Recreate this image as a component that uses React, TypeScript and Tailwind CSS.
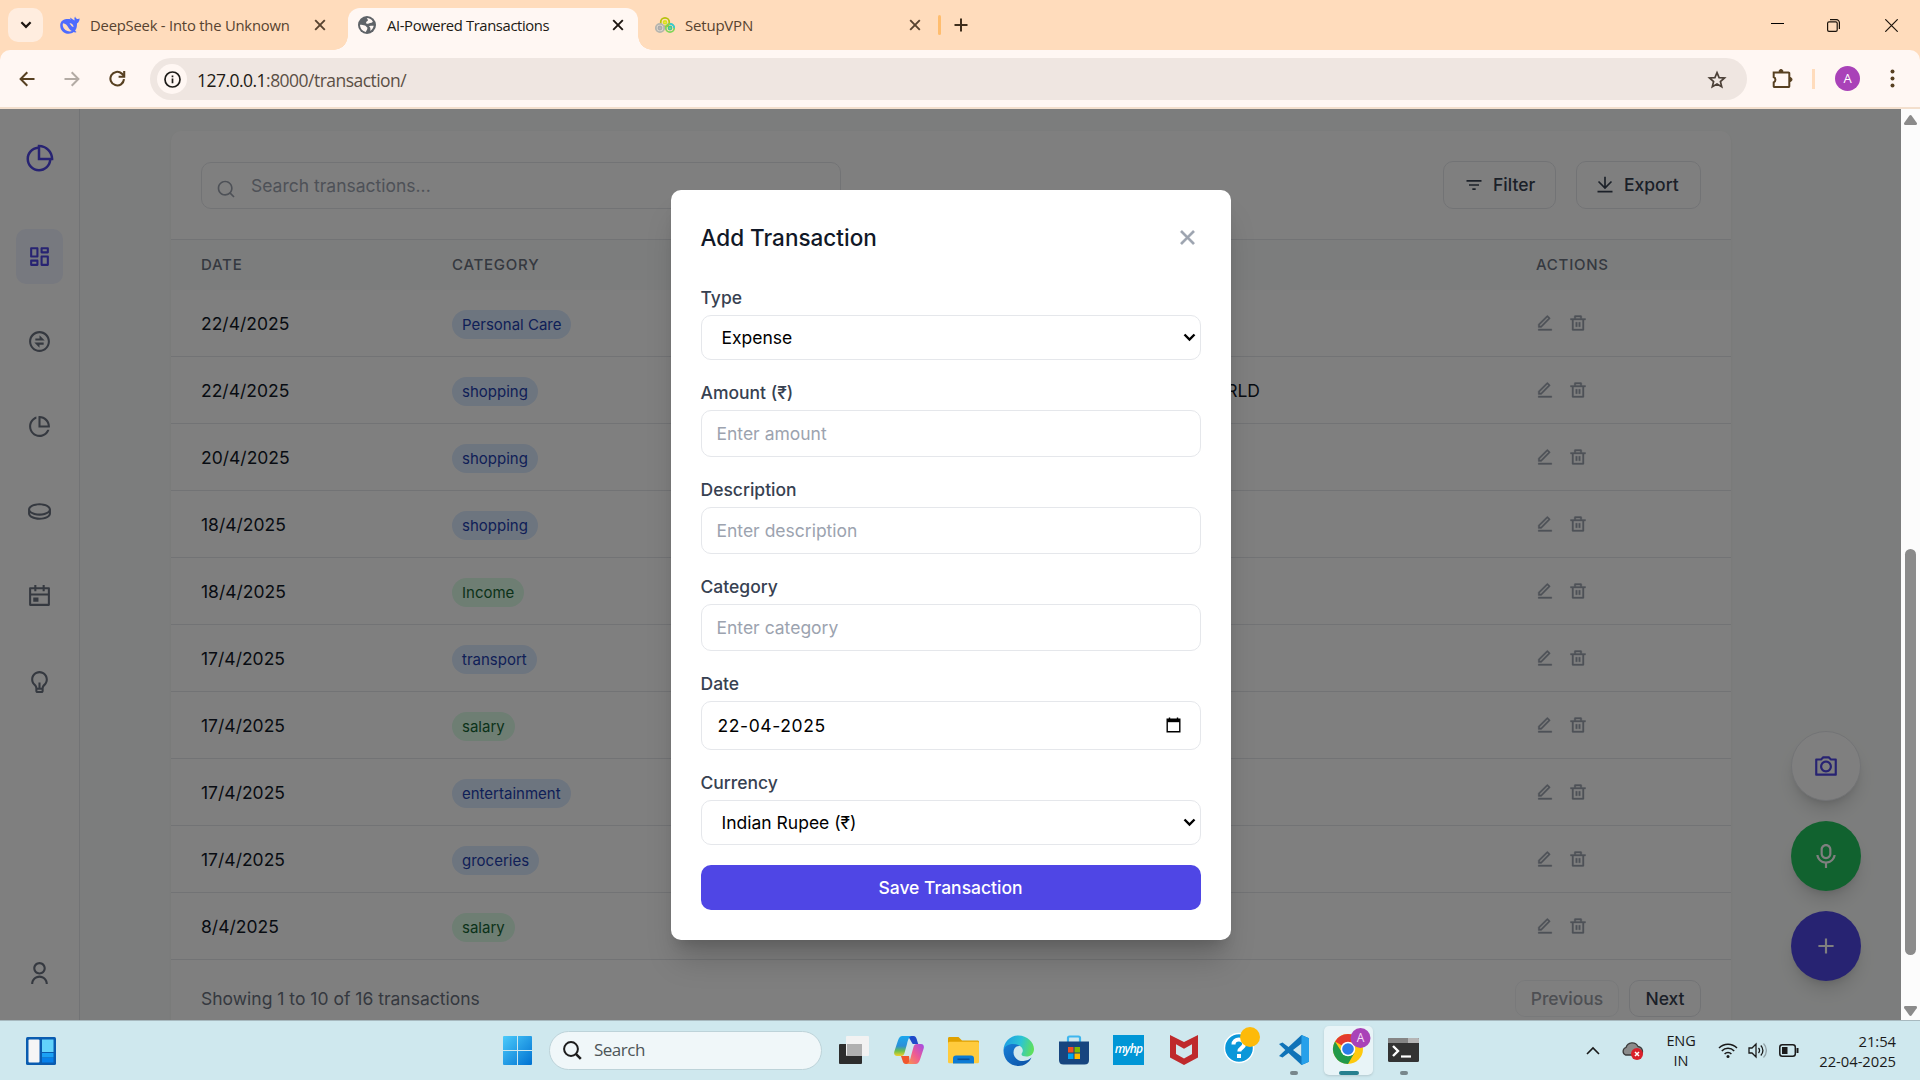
import React from "react";
import {
  RiPieChart2Line, RiDashboardLine, RiExchangeLine, RiPieChartLine, RiCoinLine, RiCalendarEventLine,
  RiLightbulbLine, RiUserLine, RiSearchLine, RiFilter3Line, RiDownloadLine, RiEditLine, RiDeleteBinLine,
  RiCameraLine, RiMicLine, RiAddLine, RiCloseLine,
} from "react-icons/ri";

type Tone = "blue" | "green";
const rows: { date: string; category: string; tone: Tone; note?: string }[] = [
  { date: "22/4/2025", category: "Personal Care", tone: "blue" },
  { date: "22/4/2025", category: "shopping", tone: "blue", note: "WORLD" },
  { date: "20/4/2025", category: "shopping", tone: "blue" },
  { date: "18/4/2025", category: "shopping", tone: "blue" },
  { date: "18/4/2025", category: "Income", tone: "green" },
  { date: "17/4/2025", category: "transport", tone: "blue" },
  { date: "17/4/2025", category: "salary", tone: "green" },
  { date: "17/4/2025", category: "entertainment", tone: "blue" },
  { date: "17/4/2025", category: "groceries", tone: "blue" },
  { date: "8/4/2025", category: "salary", tone: "green" },
];

const Cross = ({ color }: { color: string }) => (
  <svg width="12" height="12" viewBox="0 0 12 12" fill="none" stroke={color} strokeWidth="1.9">
    <path d="M1.2 1.2l9.6 9.6M10.8 1.2l-9.6 9.6" />
  </svg>
);

function DeepSeekIcon() {
  return (
    <svg width="20" height="18" viewBox="0 0 20 18">
      <path
        fill="#4d6bfe"
        d="M19.6 2.6c-.9.5-1.800.6-2.500.3-1-.4-1.700-1.300-2-2.400-.900 1.100-.900 2.700-.2 3.900-1.200-.3-2.600-1.600-4.100-2.500-.8-.5-1.200-.2-.7.4.3.400.7.800.7 1.100C6.500 2.300.2 3.500.2 9.500c0 5 3.900 8.300 8.400 8.300 2 0 3.800-.6 5.100-1.700 1 .6 2.600.4 2.900-.1-.8-.3-1.300-.8-1.500-1.400 1.700-2 1.900-4.500 1.900-7 1.500-.7 2.600-2.700 2.600-5z"
      />
      <path fill="#ffdcbc" d="M3 7.200c2.600.2 4 1.900 5.200 4 1 1.700 2.200 3.200 3.800 3.900-3.600 1.200-8.400-.9-9.200-5.300-.2-1 0-1.900.2-2.600zM9.600 7.400c1.800-.3 3.800 1.300 4 3.500-1.100.1-1.700-.5-2.200-1.200-.5-.8-.9-1.400-1.800-2.300z" />
    </svg>
  );
}

function VpnIcon() {
  return (
    <svg width="20" height="17" viewBox="0 0 20 17" fill="none" strokeWidth="1.800">
      <circle cx="10" cy="5.200" r="4.300" stroke="#b5c20c" />
      <circle cx="10" cy="5.200" r="1.400" stroke="#dbe01c" />
      <circle cx="5" cy="11" r="4.200" stroke="#b5b5ae" fill="#ded6cc" />
      <circle cx="5" cy="11" r="1.500" stroke="#aaa" />
      <circle cx="15" cy="11" r="4.200" stroke="#7fd558" />
      <path d="M15 6.800a4.200 4.200 0 0 1 4.200 4.200" stroke="#35c8d8" />
      <circle cx="15" cy="11" r="1.500" stroke="#43c98d" />
    </svg>
  );
}

function TabStrip() {
  return (
    <div className="flex h-[50px] items-end bg-[#ffdcbc] text-[15px] text-[#574330]">
      <div className="mb-2 ml-2 flex h-[34px] w-[35px] items-center justify-center rounded-[10px] bg-[#ffeddf]">
        <svg width="12" height="8" viewBox="0 0 12 8" fill="none" stroke="#1d1510" strokeWidth="2.200"><path d="M1.400 1.300L6 5.900l4.600-4.600" /></svg>
      </div>
      <div className="flex h-[50px] w-[291px] items-center pl-[17px]">
        <DeepSeekIcon />
        <span className="ml-[10px] w-[224px] whitespace-nowrap text-[14.800px] tracking-[-0.210px]">DeepSeek - Into the Unknown</span>
        <Cross color="#574330" />
      </div>
      <div className="-mr-[13px] h-[14px] w-[14px] bg-[radial-gradient(circle_at_0_0,#ffdcbc_13.5px,#fff7f3_14px)]" />
      <div className="ml-[13px] flex h-[42px] w-[290px] items-center rounded-t-[12px] bg-[#fff7f3] pb-2 pl-[10px] text-[#211a14]">
        <svg width="18" height="18" viewBox="0 0 18 18">
          <circle cx="9" cy="9" r="9" fill="#5f6368" />
          <path fill="#fff7f3" d="M2 8.800c1.800.2 3.500.1 5 .8 1.300.6 1.100 1.600 2.300 2 .4 1.300-.4 2.400-1.500 4.300C4.500 15.200 2 12.600 2 8.800zM8.700 2c2.700 0 5 1.200 6.200 3.700-1 .8-1.500 1.300-2.800 1.200-1.300.2-1.700 1-3 .9-1.500-.1-1.200-1.900-.2-2.500.6-.5 1.300-.7.900-1.600-.2-.7-.9-1-1.100-1.700zM11 10.200c1.600-.5 3-.4 4.700-.4-.3 2.200-1.700 4.200-3.500 5.300.4-1.600.6-3.600-1.200-4.900z" />
        </svg>
        <span className="ml-[11px] w-[225px] whitespace-nowrap text-[14.800px] tracking-[-0.380px]">AI-Powered Transactions</span>
        <Cross color="#1d1510" />
      </div>
      <div className="h-[14px] w-[14px] bg-[radial-gradient(circle_at_100%_0,#ffdcbc_13.5px,#fff7f3_14px)]" />
      <div className="flex h-[50px] flex-1 items-center pl-[3px]">
        <VpnIcon />
        <span className="ml-[10px] w-[224px] tracking-[-0.200px]">SetupVPN</span>
        <Cross color="#574330" />
        <div className="ml-[17px] h-5 w-[3px] rounded-full bg-[#ffbd6e]" />
        <svg className="ml-[13px]" width="14" height="14" viewBox="0 0 14 14" stroke="#3f2e1c" strokeWidth="2"><path d="M7 .5v13M.5 7h13" /></svg>
        <div className="flex-1" />
        <svg className="mr-[43px]" width="13" height="14" viewBox="0 0 13 14"><path d="M0 5.500h13" stroke="#000" strokeWidth="1" /></svg>
        <svg className="mr-[45px]" width="13" height="13" viewBox="0 0 13 13" fill="none" stroke="#1c140c" strokeWidth="1.200">
          <rect x=".6" y="2.800" width="9.600" height="9.600" rx="1.400" />
          <path d="M3 .7h6.500a2.900 2.900 0 0 1 2.900 2.900V10" />
        </svg>
        <svg className="mr-[22px]" width="13" height="13" viewBox="0 0 13 13" stroke="#1c140c" strokeWidth="1.200"><path d="M.3.3l12.400 12.400M12.700.3L.3 12.700" /></svg>
      </div>
    </div>
  );
}

function Toolbar() {
  return (
    <div className="h-[59px] bg-[#ffdcbc]">
      <div className="flex h-[59px] items-center rounded-t-[10px] border-b-2 border-[#f3dfcd] bg-[#fff7f3]">
        <svg className="ml-[19px]" width="16" height="16" viewBox="0 0 16 16" fill="none" stroke="#574021" strokeWidth="2"><path d="M15.500 8H1.800M8.300 1.300L1.600 8l6.700 6.700" /></svg>
        <svg className="ml-[29px]" width="16" height="16" viewBox="0 0 16 16" fill="none" stroke="#b3aba4" strokeWidth="2"><path d="M.5 8h13.700M7.700 1.300L14.400 8l-6.700 6.700" /></svg>
        <svg className="ml-[29px]" width="17" height="17" viewBox="0 0 17 17" fill="none" stroke="#574021" strokeWidth="2.100">
          <path d="M15 9.200A6.800 6.800 0 1 1 12.800 3.600L15 6" /><path d="M15.200 1v5.700H9.600" />
        </svg>
        <div className="ml-[24px] mt-[1px] flex h-[42px] w-[1597px] items-center rounded-full bg-[#efe6e1]">
          <div className="ml-[7px] flex h-[30px] w-[30px] items-center justify-center rounded-full bg-[#fff7f3]">
            <svg width="17" height="17" viewBox="0 0 17 17" fill="none" stroke="#1d1b18" strokeWidth="1.700">
              <circle cx="8.500" cy="8.500" r="7.500" /><path d="M8.500 7.600v4.700M8.500 4.500v1.700" />
            </svg>
          </div>
          <span className="ml-[10px] flex-1 pt-[2px] text-[17.500px] tracking-[-0.530px] text-[#5b4f45]"><span className="text-[#211a14]">127.0.0.1</span>:8000/transaction/</span>
          <svg className="mt-px mr-[20px]" width="20" height="20" viewBox="0 0 20 20" fill="none" stroke="#4c4138" strokeWidth="1.700">
            <path d="M10 2.600l2.100 5 5.400.4-4.100 3.500 1.300 5.300L10 14l-4.700 2.800 1.300-5.300L2.500 8l5.400-.4z" />
          </svg>
        </div>
        <svg className="ml-[24px]" width="22" height="22" viewBox="0 0 22 22" fill="none" stroke="#574021" strokeWidth="2">
          <path d="M3 4.500h14.500a.8.8 0 0 1 .8.8v13a.8.8 0 0 1-.8.8h-14a.8.8 0 0 1-.8-.8v-4a2.900 2.900 0 0 0 0-5.300V4.500z" />
          <path d="M8 3.500a2 2 0 0 1 4 0zM19 9.500a2 2 0 0 1 0 4z" fill="#574021" strokeWidth="1" />
        </svg>
        <div className="ml-[19px] h-[20px] w-[3px] bg-[#ffdcbc]" />
        <div className="ml-[20px] flex h-[25px] w-[25px] items-center justify-center rounded-full bg-[#a942b8] text-[13px] text-white">A</div>
        <svg className="ml-[30px]" width="5" height="19" viewBox="0 0 5 19" fill="#574021"><circle cx="2.500" cy="2.500" r="2" /><circle cx="2.500" cy="9.500" r="2" /><circle cx="2.500" cy="16.500" r="2" /></svg>
      </div>
    </div>
  );
}

function Sidebar() {
  const nav = [RiExchangeLine, RiPieChartLine, RiCoinLine, RiCalendarEventLine, RiLightbulbLine];
  return (
    <aside className="flex h-full w-20 shrink-0 flex-col items-center border-r border-gray-200 bg-white pt-[35px] text-[#6b7280]">
      <RiPieChart2Line size={30} color="#4f46e5" className="mr-[2px]" />
      <div className="mt-[55px] flex h-[55px] w-[47px] items-center justify-center rounded-[10px] bg-[#eef2ff] text-[#4f46e5]">
        <RiDashboardLine size={25} />
      </div>
      {nav.map((Icon, i) => (
        <div key={i} className="mt-[30px] flex h-[55px] w-[47px] items-center justify-center"><Icon size={25} /></div>
      ))}
      <div className="mt-auto mb-[34px]"><RiUserLine size={25} /></div>
    </aside>
  );
}

function TransactionsCard() {
  const cols = "grid grid-cols-[251px_380px_704px_1fr] items-center pl-[30px]";
  return (
    <section className="mt-[22px] w-[1560px] rounded-[10px] bg-white shadow-[0_1px_3px_rgba(0,0,0,0.06)]">
      <div className="flex h-[109px] items-center border-b border-gray-200 px-[30px]">
        <div className="flex h-[47px] w-[640px] items-center rounded-[10px] border border-gray-200 pl-[14px] text-[#9ca3af]">
          <RiSearchLine size={20} className="mt-[8px]" />
          <span className="ml-[15px] pt-[2px]">Search transactions...</span>
        </div>
        <div className="ml-auto flex gap-5 font-medium text-[#374151]">
          <div className="flex h-[48px] w-[113px] items-center gap-[9px] rounded-[10px] border border-gray-200 pl-[20px]"><RiFilter3Line size={20} />Filter</div>
          <div className="flex h-[48px] w-[125px] items-center gap-[9px] rounded-[10px] border border-gray-200 pl-[18px]"><RiDownloadLine size={20} />Export</div>
        </div>
      </div>
      <div className={cols + " h-[50px] bg-[#f9fbfa] text-[15px] font-medium tracking-[0.750px] text-[#6b7280]"}>
        <span>DATE</span><span>CATEGORY</span><span /><span>ACTIONS</span>
      </div>
      {rows.map((r, i) => (
        <div key={i} className={cols + " h-[67px] border-b border-gray-200 text-[#111827]"}>
          <span className="pt-[2px]">{r.date}</span>
          <span className="flex pt-[2px]">
            <span className={r.tone === "blue" ? "flex h-[29px] items-center rounded-full bg-[#dbeafe] px-[10px] pt-[2px] text-[15px] text-[#1e40af]" : "flex h-[29px] items-center rounded-full bg-[#dcfce7] px-[10px] pt-[2px] text-[15px] text-[#166534]"}>{r.category}</span>
          </span>
          <span className="w-[428px] justify-self-start pt-[2px] text-right">{r.note}</span>
          <span className="flex gap-[15px] text-[#9ca3af]"><RiEditLine size={18} strokeWidth={0.5} /><RiDeleteBinLine size={18} strokeWidth={0.5} /></span>
        </div>
      ))}
      <div className="flex h-[77px] items-center px-[30px] text-[#6b7280]">
        <span className="pt-[2px]">Showing 1 to 10 of 16 transactions</span>
        <div className="ml-auto flex gap-[10px] font-medium">
          <div className="flex h-[37px] w-[104px] items-center justify-center rounded-[10px] border border-gray-200 pt-[2px] text-[#374151] opacity-50">Previous</div>
          <div className="flex h-[37px] w-[72px] items-center justify-center rounded-[10px] border border-gray-200 pt-[2px] text-[#374151]">Next</div>
        </div>
      </div>
    </section>
  );
}

function FloatingActions() {
  const base = "flex h-[70px] w-[70px] items-center justify-center rounded-full shadow-[0_12px_19px_-4px_rgba(0,0,0,0.15),0_5px_8px_-5px_rgba(0,0,0,0.15)]";
  return (
    <div className="absolute right-[40px] bottom-[39px] flex flex-col gap-5">
      <div className={base + " border border-gray-200 bg-white text-[#4f46e5]"}><RiCameraLine size={26} /></div>
      <div className={base + " bg-[#22c55e] text-white"}><RiMicLine size={26} /></div>
      <div className={base + " bg-[#4f46e5] text-white"}><RiAddLine size={26} /></div>
    </div>
  );
}

function Field({ label, children }: { label: string; children: React.ReactNode }) {
  return (
    <div className="mb-5">
      <div className="mb-[5px] h-[25px] leading-[25px] font-medium text-[#374151]">{label}</div>
      {children}
    </div>
  );
}

const SelectBox = ({ value }: { value: string }) => (
  <div className="flex h-[45px] items-center justify-between rounded-[10px] border border-gray-200 pr-[4px] pl-[20px] text-black">
    <span className="pt-[2px]">{value}</span>
    <svg width="13" height="9" viewBox="0 0 13 9" fill="none" stroke="#000" strokeWidth="2.400"><path d="M1.500 1.500l5 5 5-5" /></svg>
  </div>
);

const TextBox = ({ hint }: { hint: string }) => (
  <input className="block h-[47px] w-full rounded-[10px] border border-gray-200 px-[15px] placeholder:text-[#9ca3af]" placeholder={hint} />
);

function Modal() {
  return (
    <div className="h-[750px] w-[560px] rounded-[10px] bg-white p-[30px] shadow-[0_25px_31px_-6px_rgba(0,0,0,0.18),0_10px_13px_-7px_rgba(0,0,0,0.15)]">
      <div className="mb-[30px] flex h-[35px] items-center justify-between">
        <h3 className="text-[22.500px] font-medium text-[#111827]">Add Transaction</h3>
        <RiCloseLine size={27} color="#9ca3af" strokeWidth={0.4} />
      </div>
      <Field label="Type"><SelectBox value="Expense" /></Field>
      <Field label="Amount (₹)"><TextBox hint="Enter amount" /></Field>
      <Field label="Description"><TextBox hint="Enter description" /></Field>
      <Field label="Category"><TextBox hint="Enter category" /></Field>
      <Field label="Date">
        <div className="flex h-[49px] items-center justify-between rounded-[10px] border border-gray-200 pr-[19px] pl-[16px] text-black">
          <span className="pt-[2px] tracking-[0.600px]">22-04-2025</span>
          <svg className="-mt-[2px]" width="15" height="16" viewBox="0 0 15 16" fill="none" stroke="#000" strokeWidth="1.400"><path d="M1.200 2.300h12.600v12.400H1.200z" /><path d="M1.200 3.700h12.600" strokeWidth="3" /><path d="M3.500.4v2M11.500.4v2" /></svg>
        </div>
      </Field>
      <Field label="Currency"><SelectBox value="Indian Rupee (₹)" /></Field>
      <div className="flex h-[45px] items-center justify-center rounded-[10px] bg-[#4f46e5] pt-[2px] font-medium text-white">Save Transaction</div>
    </div>
  );
}

const icons: React.ReactNode[] = [
  <svg key="tv" width="30" height="28" viewBox="0 0 30 28"><rect y="8" width="23" height="20" rx="1" fill="#2d2d2d" /><rect x="7" y="0" width="23" height="20" rx="1" fill="#f2f2f2" /><path d="M8 8h15v12H8z" fill="#b0b0b0" /></svg>,
  <svg key="cp" width="30" height="28" viewBox="0 0 30 28">
    <defs>
      <linearGradient id="cpa" x1="0" y1="0" x2="0" y2="1"><stop stopColor="#1aa7ee" /><stop offset=".5" stopColor="#2b8fd8" /><stop offset=".75" stopColor="#6cbf4b" /><stop offset="1" stopColor="#f5d028" /></linearGradient>
      <linearGradient id="cpb" x1="1" y1="0" x2="0" y2="1"><stop stopColor="#a04be8" /><stop offset=".5" stopColor="#ee5a94" /><stop offset="1" stopColor="#fb9a45" /></linearGradient>
    </defs>
    <path d="M14 0h5.500c2 0 2.600 1.300 3.200 3.200l1.500 4.800h-5.500z" fill="#1f49c9" />
    <path d="M8.500 0h9c-3 1-3.500 4-4.500 8l-2.500 9c-.5 2-1.500 3-3.500 3H3c-2.500 0-3.500-2-2.500-5l3.300-10C5 1.500 6 0 8.500 0z" fill="url(#cpa)" />
    <path d="M7 20h8l1 8h-4c-2.300 0-2.900-1.500-3.500-3.500z" fill="#f0572e" />
    <path d="M21.500 28h-9c3-1 3.500-4 4.500-8l2.500-9c.5-2 1.500-3 3.500-3h4c2.500 0 3.500 2 2.500 5l-3.300 10c-1.200 3.500-2.200 5-4.700 5z" fill="url(#cpb)" />
  </svg>,
  <svg key="ex" width="31" height="27" viewBox="0 0 31 27"><path d="M0 1.500C0 .5.600 0 1.500 0h9L14 3.500h15.500c1 0 1.500.5 1.500 1.500v6H0z" fill="#e0a100" /><rect y="4.800" width="31" height="21.500" rx="1.500" fill="#ffcb3d" /><path d="M5 26.500v-5c0-2 1-3 3-3h15c2 0 3 1 3 3v5z" fill="#0d7bd4" /><path d="M9.500 21.500h12v1.600h-12z" fill="#0a4f95" /></svg>,
  <svg key="ed" width="31" height="31" viewBox="0 0 31 31">
    <defs>
      <linearGradient id="eda" x1="0" y1=".3" x2="1" y2=".5"><stop stopColor="#1c9de4" /><stop offset=".55" stopColor="#2cc4d4" /><stop offset="1" stopColor="#5fe05a" /></linearGradient>
      <linearGradient id="edb" x1="0" y1="0" x2="1" y2="1"><stop stopColor="#1780d8" /><stop offset="1" stopColor="#0c4fa3" /></linearGradient>
    </defs>
    <path d="M.5 15.500C.5 7 7 .5 15.500.5S31 7 31 14c0 5-3.500 7.500-7.500 7.500-3 0-5-1-5-2.300 0-1 1.300-1.500 1.300-3.700 0-3-3-5.500-7.300-5.500C6.500 10 .5 12.500.5 15.500z" fill="url(#eda)" />
    <path d="M.5 15.500C1 11.500 5.500 9 10 9c3 0 5.500.8 7 2-4-.5-6.500 2.500-6.500 6.500 0 5 4.500 9 10 8.500 3.500-.3 6-1.500 8-3.500-2.500 5.500-7.500 8.500-13 8.500C7 31 .5 24.500.5 15.500z" fill="url(#edb)" />
  </svg>,
  <svg key="st" width="30" height="30" viewBox="0 0 30 30"><path d="M9 7V3c0-1 .6-1.500 1.500-1.500h9c1 0 1.500.5 1.500 1.500v4" fill="none" stroke="#3fb6ee" strokeWidth="2.200" /><path d="M0 6.500h30V25c0 3-1.500 4.500-4.500 4.500h-21C1.500 29.500 0 28 0 25z" fill="#17457f" /><path d="M9 12h5.500v5.500H9z" fill="#f25022" /><path d="M15.500 12H21v5.500h-5.500z" fill="#7fba00" /><path d="M9 18.500h5.500V24H9z" fill="#00a4ef" /><path d="M15.500 18.500H21V24h-5.500z" fill="#ffb900" /></svg>,
  <div key="hp" className="flex h-[30px] w-[31px] items-center justify-center bg-[#0096d6] pb-[2px] text-[12px] font-semibold tracking-[-0.800px] text-white italic">myhp</div>,
  <svg key="mc" width="28" height="30" viewBox="0 0 28 30"><path d="M0 0l14 7L28 0v22.500L14 30 0 22.500zM6 9.300v9.800l8 4.400 8-4.400V9.300l-8 4.500z" fill="#bf2a2c" fillRule="evenodd" /></svg>,
  <svg key="he" width="40" height="38" viewBox="0 0 40 38"><circle cx="17" cy="21" r="14.500" fill="#0a97d9" stroke="#fff" strokeWidth="1.400" /><path d="M11.500 17.500c0-3.500 2.500-5 5.300-5 3 0 5.400 1.800 5.400 4.500 0 4-4.700 3.800-4.900 7.500M17 27v4" fill="none" stroke="#fff" strokeWidth="4" /><circle cx="28" cy="10" r="10" fill="#fdba09" /></svg>,
  <svg key="vs" width="30" height="30" viewBox="0 0 30 30"><path d="M22.500 0L30 3.200v23.600L22.500 30 9.500 18 3.500 22.600 0 20.900 6.300 15 0 9.100l3.500-1.700 6 4.600zM22.500 8.500L14 15l8.500 6.500z" fill="#0f73b8" fillRule="evenodd" /><path d="M22.500 0L30 3.200v23.600L22.500 30z" fill="#26a0ea" /></svg>,
  <svg key="ch" width="41" height="38" viewBox="0 0 41 38">
    <circle cx="18" cy="21" r="15" fill="#fdc90f" />
    <path d="M18 21L5 13.500A15 15 0 0 1 31 13.500L31 14H18z" fill="#e33b2e" />
    <path d="M5 13.500A15 15 0 0 0 18 36l6.500-11.300L18 28l-6-3.500z" fill="#21994a" />
    <circle cx="18" cy="21" r="7.300" fill="#fff" /><circle cx="18" cy="21" r="5.800" fill="#2b7de9" />
    <circle cx="30.500" cy="10" r="10" fill="#a942b8" />
    <text x="30.500" y="14.200" fontSize="12" textAnchor="middle" fill="#f3dff5">A</text>
  </svg>,
  <svg key="te" width="31" height="24" viewBox="0 0 31 24"><rect width="31" height="24" rx="1.500" fill="#333" /><path d="M1.500 0h28C30.500 0 31 .6 31 1.500V5H0V1.500C0 .6.500 0 1.500 0z" fill="#858585" /><path d="M20 0h9.500C30.500 0 31 .6 31 1.500V5H20z" fill="#b5b5b5" /><path d="M5 8l5 5-5 5" fill="none" stroke="#fff" strokeWidth="2.400" /><path d="M13 18.500h10" stroke="#fff" strokeWidth="2.200" /></svg>,
];

function Taskbar() {
  return (
    <div className="flex h-[60px] items-center border-t border-[#a8b9bf] bg-[#cfe8ee] text-[#1a1a1a]">
      <svg className="ml-[26px]" width="30" height="28" viewBox="0 0 30 28"><rect width="30" height="28" rx="1.500" fill="#0a5cb0" /><rect x="2.500" y="2.500" width="11" height="23" rx="1" fill="#f5f5f5" /><path d="M16 2.500h11.500V15H16z" fill="#62d3fb" /><path d="M16 16h11.500v4.500H16z" fill="#1ba1f5" /><path d="M16 21h11.500v4.500H16z" fill="#0680ea" /></svg>
      <svg className="ml-[447px]" width="29" height="29" viewBox="0 0 29 29">
        <defs><linearGradient id="win" x1="0" y1="0" x2="1" y2="1"><stop stopColor="#4ccbfb" /><stop offset="1" stopColor="#0071d1" /></linearGradient></defs>
        <path d="M1 0h13v14H0V1a1 1 0 0 1 1-1zM15 0h13a1 1 0 0 1 1 1v13H15zM0 15h14v14H1a1 1 0 0 1-1-1zM15 15h14v13a1 1 0 0 1-1 1H15z" fill="url(#win)" />
      </svg>
      <div className="-mt-px ml-[17px] flex h-[39px] w-[273px] items-center rounded-full border border-[#bdd3d9] bg-[#f0f7f9] pl-[13px] text-[#4d5558]">
        <svg width="19" height="19" viewBox="0 0 19 19" fill="none" stroke="#1c1c1c"><circle cx="8" cy="8" r="6.900" strokeWidth="2" /><path d="M12.800 12.800l5 5" strokeWidth="2.600" /></svg>
        <span className="ml-[12px] text-[17px] tracking-[-0.500px]">Search</span>
      </div>
      <div className="-mt-px ml-[4px] flex h-full">
        {icons.map((ic, i) => (
          <div key={i} className={i === 9 ? "relative mx-[3px] my-[5px] flex w-[49px] items-center justify-center rounded-[5px] bg-[#e8f4f7] shadow-sm" : "relative flex w-[55px] items-center justify-center"}>
            <div className={i === 7 ? "-mt-[8px] ml-[6px]" : i === 9 ? "-mt-[7px] ml-[4px]" : ""}>{ic}</div>
            {i === 9 && <div className="absolute bottom-0 h-[4px] w-[20px] rounded-full bg-[#27808f]" />}
            {(i === 8 || i === 10) && <div className="absolute bottom-[5px] h-[4px] w-[8px] rounded-full bg-[#78868b]" />}
          </div>
        ))}
      </div>
      <div className="ml-auto flex items-center">
        <svg width="14" height="9" viewBox="0 0 14 9" fill="none" stroke="#1a1a1a" strokeWidth="1.600"><path d="M1 8l6-6 6 6" /></svg>
        <svg className="ml-[22px]" width="22" height="19" viewBox="0 0 22 19"><path d="M3.500 14A4 4 0 0 1 4 6.500a6.500 6.500 0 0 1 12-1 5 5 0 0 1 3 8.500z" fill="#8b8b8b" stroke="#3b3b3b" strokeWidth="1.300" /><circle cx="15" cy="13" r="6" fill="#d9202b" /><path d="M13 11l4 4M17 11l-4 4" stroke="#fff" strokeWidth="1.500" /></svg>
        <div className="ml-[21px] w-[32px] text-center text-[14.500px] leading-5 tracking-[-0.100px]">ENG<br />IN</div>
        <svg className="ml-[21px]" width="20" height="17" viewBox="0 0 20 17" fill="none" stroke="#1a1a1a" strokeWidth="1.500"><path d="M1 6a12.500 12.500 0 0 1 18 0M3.800 9a8.600 8.600 0 0 1 12.400 0M6.600 12a4.700 4.700 0 0 1 6.800 0" /><circle cx="10" cy="14.500" r="1.500" fill="#1a1a1a" stroke="none" /></svg>
        <svg className="ml-[10px]" width="19" height="17" viewBox="0 0 19 17" fill="none" stroke="#1a1a1a" strokeWidth="1.300"><path d="M1 6h3l4-4v13l-4-4H1zM10.500 6a3.500 3.500 0 0 1 0 5M12.800 3.500a7 7 0 0 1 0 10" /><path d="M15.500 1.500a10 10 0 0 1 0 14" stroke="#93a3a8" /></svg>
        <svg className="ml-[12px]" width="20" height="13" viewBox="0 0 20 13" fill="none" stroke="#1a1a1a" strokeWidth="1.500"><rect x=".8" y=".8" width="15.500" height="11.400" rx="2.500" /><rect x="3" y="3" width="5.500" height="7" fill="#1a1a1a" stroke="none" /><path d="M18.500 4v5" strokeWidth="2" /></svg>
        <div className="mr-[24px] ml-[19px] w-[78px] text-right text-[14.800px] leading-5 tracking-[-0.050px] whitespace-nowrap">21:54<br />22-04-2025</div>
      </div>
    </div>
  );
}

export default function App() {
  return (
    <div className="h-[1080px] w-[1920px] overflow-hidden font-['Open_Sans',sans-serif]">
      <TabStrip />
      <Toolbar />
      <div className="flex h-[911px] overflow-hidden font-['Inter',sans-serif] text-[17.500px]">
        <div className="relative flex h-full w-[1901px] overflow-hidden bg-[#f9fbfa]">
          <Sidebar />
          <div className="pl-[91px]"><TransactionsCard /></div>
          <FloatingActions />
          <div className="absolute inset-0 flex items-start justify-center bg-black/50 pt-[81px]"><Modal /></div>
        </div>
        <div className="flex w-[19px] flex-col items-center bg-[#fcfcfc]">
          <svg className="mt-[6px]" width="13" height="10" viewBox="0 0 13 10"><path d="M6.500 0c.6 0 .9.300 1.200.7l5 7c.7 1.100.3 2.300-1 2.300H1.300C0 10-.4 8.800.3 7.700l5-7C5.600.3 5.900 0 6.500 0z" fill="#8b8b8b" /></svg>
          <div className="mt-[424px] h-[406px] w-[11px] rounded-full bg-[#8b8b8b]" />
          <svg className="mt-auto mb-[4px] rotate-180" width="13" height="10" viewBox="0 0 13 10"><path d="M6.500 0c.6 0 .9.300 1.200.7l5 7c.7 1.100.3 2.300-1 2.300H1.300C0 10-.4 8.800.3 7.700l5-7C5.600.3 5.900 0 6.500 0z" fill="#8b8b8b" /></svg>
        </div>
      </div>
      <Taskbar />
    </div>
  );
}
